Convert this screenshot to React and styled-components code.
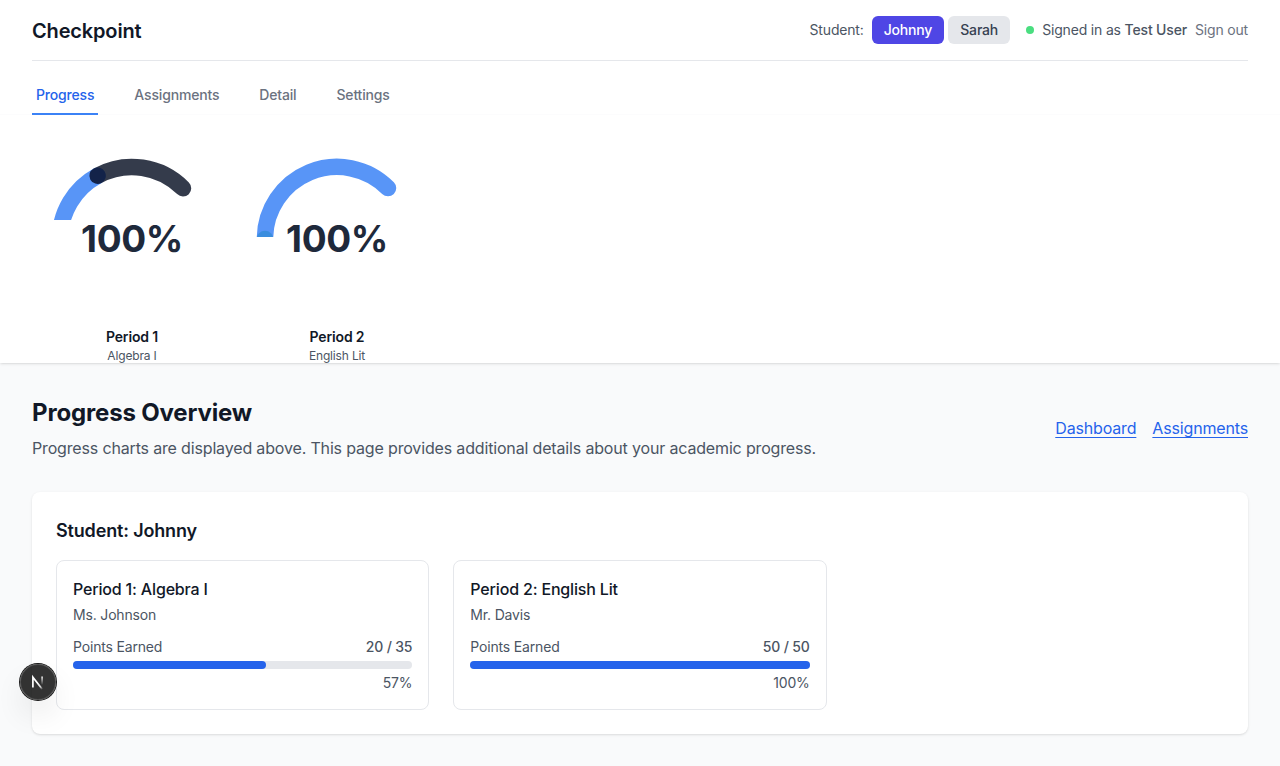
import React from "react";
import styled, { createGlobalStyle } from "styled-components";

const Global = createGlobalStyle`
  *, *::before, *::after { box-sizing: border-box; }
  body { margin: 0; background: #f9fafb; color: #111827; font: 16px/24px Inter, "Liberation Sans", sans-serif; letter-spacing: -0.16px; -webkit-font-smoothing: antialiased; overflow: hidden; }
  h1, h2, h3, p { margin: 0; }
  button { font: inherit; border: 0; background: none; padding: 0; letter-spacing: inherit; }
  a { color: inherit; }
`;

const Header = styled.header`
  position: relative;
  height: 363px;
  padding: 0 32px;
  background: #fff;
  box-shadow: 0 1px 3px rgba(0, 0, 0, 0.1), 0 1px 2px -1px rgba(0, 0, 0, 0.1);
`;
const TopBar = styled.div`
  display: flex;
  justify-content: space-between;
  align-items: center;
  height: 61px;
  border-bottom: 1px solid #e5e7eb;
`;
const Brand = styled.h1`
  font-size: 20px;
  line-height: 28px;
  font-weight: 600;
  padding-top: 1px;
`;
const Account = styled.div`
  display: flex;
  align-items: center;
  gap: 16px;
  font-size: 14px;
  line-height: 20px;
  letter-spacing: -0.17px;
  color: #4b5563;
`;
const Group = styled.div`
  display: flex;
  align-items: center;
  gap: 8px;
`;
const Students = styled.div`
  display: flex;
  gap: 4px;
`;
const StudentButton = styled.button`
  padding: 4px 12px;
  border-radius: 6px;
  font-weight: 500;
  color: ${(p) => (p.$active ? "#fff" : "#374151")};
  background: ${(p) => (p.$active ? "#4f46e5" : "#e5e7eb")};
`;
const Dot = styled.span`
  width: 8px;
  height: 8px;
  border-radius: 50%;
  background: #4ade80;
`;
const Name = styled.span`
  font-weight: 500;
`;
const SignOut = styled.button`
  color: #6b7280;
`;
const Tabs = styled.nav`
  display: flex;
  gap: 32px;
  margin: 0 -32px;
  padding: 16px 32px 0;
  border-bottom: 1px solid #fcfcfd;
`;
const Tab = styled.a`
  margin-bottom: -1px;
  padding: 8px 4px;
  border-bottom: 2px solid ${(p) => (p.$active ? "#3b82f6" : "transparent")};
  font-size: 14px;
  line-height: 20px;
  letter-spacing: -0.17px;
  font-weight: 500;
  color: ${(p) => (p.$active ? "#2563eb" : "#6b7280")};
`;
const Gauges = styled.div`
  display: flex;
  gap: 5px;
  padding-top: 24px;
`;
const Gauge = styled.figure`
  margin: 0;
  width: 200px;
  text-align: center;
`;
const Dial = styled.svg`
  display: block;
  width: 200px;
  height: 188px;
`;
const Arc = styled.path`
  mix-blend-mode: ${(p) => (p.$blend ? "multiply" : "normal")};
`;
const DialValue = styled.text`
  font: 750 37px Inter, sans-serif;
  letter-spacing: -0.4px;
  fill: #1e293b;
  text-anchor: middle;
`;
const GaugeTitle = styled.div`
  font-size: 14px;
  line-height: 20px;
  letter-spacing: -0.15px;
  font-weight: 600;
`;
const GaugeCaption = styled.div`
  font-size: 12px;
  line-height: 18px;
  color: #4b5563;
`;
const Main = styled.main`
  padding: 33px 32px;
`;
const Intro = styled.div`
  display: flex;
  justify-content: space-between;
  align-items: center;
  height: 64px;
  margin-bottom: 32px;
`;
const Title = styled.h2`
  font-size: 24px;
  line-height: 32px;
  font-weight: 700;
  padding-top: 1px;
  margin-bottom: 7px;
`;
const Lead = styled.p`
  color: #4b5563;
`;
const Links = styled.div`
  display: flex;
  gap: 16px;
  letter-spacing: -0.16px;
  text-underline-offset: 3px;
  color: #2563eb;
`;
const Panel = styled.section`
  padding: 24px;
  border-radius: 8px;
  background: #fff;
  box-shadow: 0 1px 3px rgba(0, 0, 0, 0.1), 0 1px 2px -1px rgba(0, 0, 0, 0.1);
`;
const PanelTitle = styled.h2`
  font-size: 18px;
  line-height: 28px;
  font-weight: 600;
  padding-top: 1px;
  margin-bottom: 15px;
`;
const Cards = styled.div`
  display: grid;
  grid-template-columns: repeat(3, 1fr);
  gap: 24px;
`;
const Card = styled.article`
  padding: 16px;
  border: 1px solid #e5e7eb;
  border-radius: 8px;
  font-size: 14px;
  line-height: 20px;
  letter-spacing: -0.17px;
  color: #4b5563;
`;
const CardTitle = styled.h3`
  font-size: 16px;
  line-height: 24px;
  font-weight: 500;
  color: #111827;
  margin-bottom: 4px;
`;
const Points = styled.div`
  display: flex;
  justify-content: space-between;
  margin: 12px 0 4px;
`;
const Track = styled.div`
  height: 8px;
  border-radius: 4px;
  background: #e5e7eb;
  margin-bottom: 4px;
`;
const Fill = styled.div`
  height: 8px;
  border-radius: 4px;
  background: #2563eb;
`;
const Percent = styled.div`
  text-align: right;
`;
const DevBadge = styled.button`
  position: fixed;
  left: 20px;
  top: 664px;
  width: 36px;
  height: 36px;
  display: grid;
  place-items: center;
  border-radius: 50%;
  background: rgba(0, 0, 0, 0.8);
  box-shadow: 0 0 0 1px #171717, inset 0 0 0 1px hsla(0, 0%, 100%, 0.14), 0 16px 32px -8px rgba(0, 0, 0, 0.24);
`;

const gauges = [
  {
    title: "Period 1",
    caption: "Algebra I",
    clip: 81,
    arcs: [
      { d: "M28 100A72 72 0 0 1 65.6 36.7", color: "#3b82f6", opacity: 0.85 },
      { d: "M65.6 36.7A72 72 0 0 1 151 49.3", color: "#1e2637", opacity: 0.9, blend: true },
    ],
  },
  {
    title: "Period 2",
    caption: "English Lit",
    clip: 98,
    arcs: [
      { d: "M28 100A72 72 0 0 1 151 49.1", color: "#3b82f6", opacity: 0.85 },
      { d: "M28 100L28 100.01", color: "#2689cd", opacity: 0.6 },
    ],
  },
];

const courses = [
  { title: "Period 1: Algebra I", teacher: "Ms. Johnson", earned: 20, total: 35 },
  { title: "Period 2: English Lit", teacher: "Mr. Davis", earned: 50, total: 50 },
];

export default function App() {
  return (
    <>
      <Global />
      <Header>
        <TopBar>
          <Brand>Checkpoint</Brand>
          <Account>
            <Group>
              <span>Student:</span>
              <Students>
                <StudentButton $active>Johnny</StudentButton>
                <StudentButton>Sarah</StudentButton>
              </Students>
            </Group>
            <Group>
              <Dot />
              <span>Signed in as <Name>Test User</Name></span>
              <SignOut>Sign out</SignOut>
            </Group>
          </Account>
        </TopBar>
        <Tabs>
          <Tab $active>Progress</Tab>
          <Tab>Assignments</Tab>
          <Tab>Detail</Tab>
          <Tab>Settings</Tab>
        </Tabs>
        <Gauges>
          {gauges.map((g, i) => (
            <Gauge key={g.title}>
              <Dial viewBox="0 0 200 188">
                <clipPath id={`dial-${i}`}>
                  <rect width="200" height={g.clip} />
                </clipPath>
                <g clipPath={`url(#dial-${i})`} fill="none" strokeWidth="16.5" strokeLinecap="round">
                  {g.arcs.map((a) => (
                    <Arc key={a.d} d={a.d} stroke={a.color} strokeOpacity={a.opacity} $blend={a.blend} />
                  ))}
                </g>
                <DialValue x="100" y="113.3">100%</DialValue>
              </Dial>
              <GaugeTitle>{g.title}</GaugeTitle>
              <GaugeCaption>{g.caption}</GaugeCaption>
            </Gauge>
          ))}
        </Gauges>
      </Header>
      <Main>
        <Intro>
          <div>
            <Title>Progress Overview</Title>
            <Lead>Progress charts are displayed above. This page provides additional details about your academic progress.</Lead>
          </div>
          <Links>
            <a href="#dashboard">Dashboard</a>
            <a href="#assignments">Assignments</a>
          </Links>
        </Intro>
        <Panel>
          <PanelTitle>Student: Johnny</PanelTitle>
          <Cards>
            {courses.map((c) => (
              <Card key={c.title}>
                <CardTitle>{c.title}</CardTitle>
                <p>{c.teacher}</p>
                <Points>
                  <span>Points Earned</span>
                  <Name>{c.earned} / {c.total}</Name>
                </Points>
                <Track>
                  <Fill style={{ width: `${Math.round((c.earned / c.total) * 100)}%` }} />
                </Track>
                <Percent>{Math.round((c.earned / c.total) * 100)}%</Percent>
              </Card>
            ))}
          </Cards>
        </Panel>
      </Main>
      <DevBadge aria-label="Developer tools">
        <svg width="16" height="16" viewBox="0 0 16 16" fill="none">
          <defs>
            <linearGradient id="diagonal" x1="8" y1="8.5" x2="13" y2="15" gradientUnits="userSpaceOnUse">
              <stop stopColor="#fff" />
              <stop offset="0.6" stopColor="#fff" stopOpacity="0.8" />
              <stop offset="1" stopColor="#fff" stopOpacity="0" />
            </linearGradient>
            <linearGradient id="stem" x1="12" y1="2" x2="12" y2="11" gradientUnits="userSpaceOnUse">
              <stop stopColor="#fff" />
              <stop offset="1" stopColor="#fff" stopOpacity="0" />
            </linearGradient>
          </defs>
          <path d="M2.9 13.5V3.2L12.3 15.2" stroke="url(#diagonal)" strokeWidth="1.7" />
          <path d="M12.1 2.5V10.7" stroke="url(#stem)" strokeWidth="1.6" />
        </svg>
      </DevBadge>
    </>
  );
}
